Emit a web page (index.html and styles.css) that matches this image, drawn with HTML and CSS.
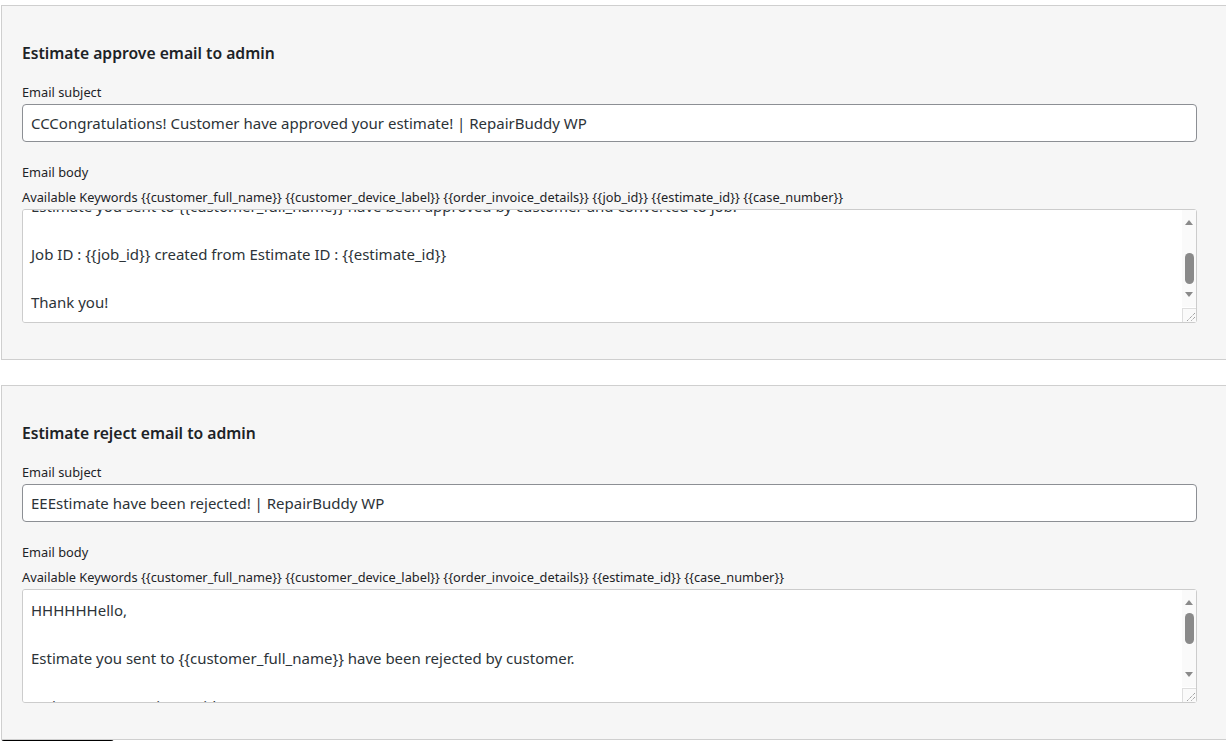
FILE: index.html
```html
<!DOCTYPE html>
<html>
<head>
<meta charset="utf-8">
<link rel="stylesheet" href="styles.css">
</head>
<body>
<div class="page">
  <section class="panel">
    <h2 class="panel-title">Estimate approve email to admin</h2>
    <label class="field-label">Email subject</label>
    <input class="text-input" type="text" value="CCCongratulations! Customer have approved your estimate! | RepairBuddy WP">
    <label class="field-label body-label">Email body</label>
    <div class="keywords">Available Keywords {{customer_full_name}} {{customer_device_label}} {{order_invoice_details}} {{job_id}} {{estimate_id}} {{case_number}}</div>
    <div class="textarea-wrap">
      <textarea class="text-area" id="approveBody">Hello,

Estimate you sent to {{customer_full_name}} have been approved by customer and converted to job.

Job ID : {{job_id}} created from Estimate ID : {{estimate_id}}

Thank you!</textarea>
      <div class="scrollbar">
        <span class="arrow arrow-up"></span>
        <span class="thumb thumb-scrolled"></span>
        <span class="arrow arrow-down"></span>
      </div>
      <div class="resize-corner">
        <svg width="13" height="13" viewBox="0 0 13 13"><path d="M12 4 L4 12 M12 8 L8 12" stroke="#7a7a7a" stroke-width="1" stroke-dasharray="1 1" fill="none"/></svg>
      </div>
    </div>
  </section>

  <section class="panel">
    <h2 class="panel-title">Estimate reject email to admin</h2>
    <label class="field-label">Email subject</label>
    <input class="text-input" type="text" value="EEEstimate have been rejected! | RepairBuddy WP">
    <label class="field-label body-label">Email body</label>
    <div class="keywords">Available Keywords {{customer_full_name}} {{customer_device_label}} {{order_invoice_details}} {{estimate_id}} {{case_number}}</div>
    <div class="textarea-wrap">
      <textarea class="text-area">HHHHHHello,

Estimate you sent to {{customer_full_name}} have been rejected by customer.

Estimate ID : {{estimate_id}}

Thank you!</textarea>
      <div class="scrollbar">
        <span class="arrow arrow-up"></span>
        <span class="thumb"></span>
        <span class="arrow arrow-down"></span>
      </div>
      <div class="resize-corner">
        <svg width="13" height="13" viewBox="0 0 13 13"><path d="M12 4 L4 12 M12 8 L8 12" stroke="#7a7a7a" stroke-width="1" stroke-dasharray="1 1" fill="none"/></svg>
      </div>
    </div>
  </section>
  <div class="next-button"></div>
</div>
<script src="script.js"></script>
</body>
</html>
```

FILE: styles.css
```css
html, body {
  margin: 0;
  padding: 0;
  background: #ffffff;
  overflow: hidden;
  height: 741px;
}
body {
  font-family: "Noto Sans", "Open Sans", sans-serif;
  color: #1d2327;
}
.page {
  padding-top: 5px;
  padding-left: 1px;
  width: 1260px;
}
.panel {
  background: #f6f6f6;
  border: 1px solid #cfcfcf;
  border-right: none;
  padding: 0 20px 36px 20px;
  margin-bottom: 25px;
  display: flex;
  flex-direction: column;
  align-items: flex-start;
}
.panel-title {
  font-size: 15.7px;
  font-weight: 600;
  margin: 35px 0 0 0;
  line-height: 24px;
  color: #1d2327;
}
.field-label {
  font-size: 12.8px;
  line-height: 18px;
  margin-top: 18px;
  color: #1d2327;
}
.body-label {
  margin-top: 21px;
}
.keywords {
  font-size: 12.8px;
  line-height: 18px;
  margin-top: 7px;
  color: #1d2327;
}
.text-input {
  box-sizing: border-box;
  width: 1175px;
  height: 38px;
  margin: 3px 0 0 0;
  padding: 0 8px;
  border: 1px solid #8c8f94;
  border-radius: 4px;
  background: #ffffff;
  font-family: "Noto Sans", "Open Sans", sans-serif;
  font-size: 15px;
  color: #2c3338;
  outline: none;
}
.textarea-wrap {
  position: relative;
  width: 1175px;
  height: 114px;
  margin-top: 3px;
}
.text-area {
  display: block;
  box-sizing: border-box;
  width: 1175px;
  height: 114px;
  margin: 0;
  padding: 8px 8px;
  border: 1px solid #cccccc;
  border-radius: 3px;
  background: #ffffff;
  font-family: "Noto Sans", "Open Sans", sans-serif;
  font-size: 15px;
  line-height: 24px;
  color: #2c3338;
  resize: none;
  overflow-y: scroll;
  outline: none;
}
.scrollbar {
  position: absolute;
  top: 1px;
  right: 1px;
  width: 14px;
  height: 97px;
  background: #fafafa;
  display: flex;
  flex-direction: column;
  align-items: center;
}
.arrow {
  display: block;
  width: 0;
  height: 0;
  border-left: 4.5px solid transparent;
  border-right: 4.5px solid transparent;
}
.arrow-up {
  margin-top: 10px;
  border-bottom: 5px solid #8a8a8a;
}
.arrow-down {
  margin-top: auto;
  margin-bottom: 10px;
  border-top: 5px solid #8a8a8a;
}
.thumb {
  display: block;
  width: 9px;
  height: 31px;
  border-radius: 5px;
  background: #8a8a8a;
  margin-top: 8px;
}
.thumb-scrolled {
  margin-top: 28px;
}
.resize-corner {
  position: absolute;
  right: 1px;
  bottom: 1px;
  width: 14px;
  height: 14px;
  box-sizing: border-box;
  border-left: 1px solid #dedede;
  border-top: 1px solid #dedede;
  background: #fafafa;
  display: flex;
  align-items: flex-end;
  justify-content: flex-end;
}
.resize-corner svg {
  display: block;
}
.next-button {
  margin-top: -25px;
  width: 113px;
  height: 10px;
  background: #000000;
  border-radius: 3px 3px 0 0;
}
```

FILE: script.js
```js
document.getElementById('approveBody').scrollTop = 72;
```
